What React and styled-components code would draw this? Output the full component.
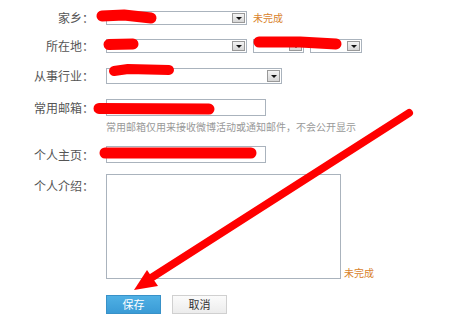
import React from 'react';
import styled, { createGlobalStyle } from 'styled-components';

const GlobalStyle = createGlobalStyle`
  html, body {
    margin: 0;
    padding: 0;
    background: #fff;
  }
  body {
    font-family: "Noto Sans CJK SC", "Noto Sans", sans-serif;
  }
`

const Page = styled.div`
  position: relative;
  width: 449px;
  height: 333px;
  overflow: hidden;
  background: #fff;
`

const Form = styled.div`
  display: flex;
  flex-direction: column;
  padding-top: 11px;
`

const Row = styled.div`
  display: grid;
  grid-template-columns: 94px 1fr;
  column-gap: 12px;
  align-items: ${props => props.top ? 'start' : 'center'};
  margin-top: ${props => props.gap || 0}px;
`

const Label = styled.div`
  text-align: right;
  font-size: 12px;
  line-height: 14px;
  color: #555;
  white-space: nowrap;
  padding-top: ${props => props.top ? 5 : 0}px;
`

const Fields = styled.div`
  display: flex;
  align-items: ${props => props.bottom ? 'flex-end' : 'center'};
  gap: ${props => props.gap || 6}px;
`

const SelectBox = styled.div`
  box-sizing: border-box;
  width: ${props => props.w}px;
  height: ${props => props.h || 14}px;
  border: 1px solid #aab3bd;
  background: #fff;
  display: flex;
  align-items: center;
  justify-content: flex-end;
  padding: 0 1px;
`

const DropBtn = styled.span`
  box-sizing: border-box;
  flex: none;
  width: 13px;
  height: calc(100% - 2px);
  background: linear-gradient(#f4f4f4, #d6d6d6);
  border: 1px solid #999;
  display: flex;
  align-items: center;
  justify-content: center;

  &::after {
    content: '';
    border-left: 3px solid transparent;
    border-right: 3px solid transparent;
    border-top: 3px solid #111;
  }
`

const Input = styled.div`
  box-sizing: border-box;
  width: ${props => props.w}px;
  height: ${props => props.h}px;
  border: 1px solid #aab3bd;
  background: #fff;
`

const Status = styled.span`
  font-size: 10px;
  line-height: 12px;
  color: #d9822b;
  white-space: nowrap;
`

const Hint = styled.div`
  grid-column: 2;
  font-size: 10px;
  line-height: 12px;
  color: #999;
  white-space: nowrap;
`

const Buttons = styled.div`
  display: flex;
  gap: 11px;
`

const Button = styled.button`
  box-sizing: border-box;
  width: 55px;
  height: 19px;
  padding: 0;
  font-family: inherit;
  font-size: 11px;
  line-height: 17px;
  cursor: pointer;
  border: 1px solid ${props => props.primary ? '#3891c8' : '#d0d0d0'};
  background: ${props => props.primary
    ? 'linear-gradient(#4fb0e4, #3a9bd6)'
    : 'linear-gradient(#fbfbfb, #ececec)'};
  color: ${props => props.primary ? '#fff' : '#333'};
`

const Marks = styled.svg`
  position: absolute;
  left: 0;
  top: 0;
  pointer-events: none;
`

const Select = ({ w, h }) => (
  <SelectBox w={w} h={h}>
    <DropBtn />
  </SelectBox>
)

// red marker scribbles and the arrow pointing to 保存
const Annotations = () => (
  <Marks width="449" height="333" viewBox="0 0 449 333">
    <g stroke="#f00" strokeLinecap="round" strokeLinejoin="round" fill="none">
      <path d="M102 16 L124 15 L151 18" strokeWidth="11" />
      <path d="M109 44.5 L133 44" strokeWidth="11" />
      <path d="M259 42 L300 42 L336 44" strokeWidth="11" />
      <path d="M114 71 L128 69 L169 70" strokeWidth="10" />
      <path d="M99 108.5 L209 109" strokeWidth="11" />
      <path d="M105 153 L251 153" strokeWidth="11" />
      <path d="M409 113 L151 278" strokeWidth="8" />
    </g>
    <polygon points="134,290 147,270 158,286" fill="#f00" />
  </Marks>
)

const App = () => (
  <Page>
    <GlobalStyle />
    <Form>
      <Row>
        <Label>家乡：</Label>
        <Fields>
          <Select w={141} />
          <Status>未完成</Status>
        </Fields>
      </Row>
      <Row gap={14}>
        <Label>所在地：</Label>
        <Fields>
          <Select w={141} />
          <Select w={51} />
          <Select w={52} />
        </Fields>
      </Row>
      <Row gap={15}>
        <Label>从事行业：</Label>
        <Fields>
          <Select w={176} h={16} />
        </Fields>
      </Row>
      <Row gap={15}>
        <Label>常用邮箱：</Label>
        <Fields>
          <Input w={160} h={17} />
        </Fields>
      </Row>
      <Row gap={5}>
        <Hint>常用邮箱仅用来接收微博活动或通知邮件，不会公开显示</Hint>
      </Row>
      <Row gap={13}>
        <Label>个人主页：</Label>
        <Fields>
          <Input w={160} h={17} />
        </Fields>
      </Row>
      <Row gap={11} top>
        <Label top>个人介绍：</Label>
        <Fields bottom gap={3}>
          <Input w={235} h={105} />
          <Status>未完成</Status>
        </Fields>
      </Row>
      <Row gap={16}>
        <div />
        <Buttons>
          <Button primary>保存</Button>
          <Button>取消</Button>
        </Buttons>
      </Row>
    </Form>
    <Annotations />
  </Page>
)

export default App;
